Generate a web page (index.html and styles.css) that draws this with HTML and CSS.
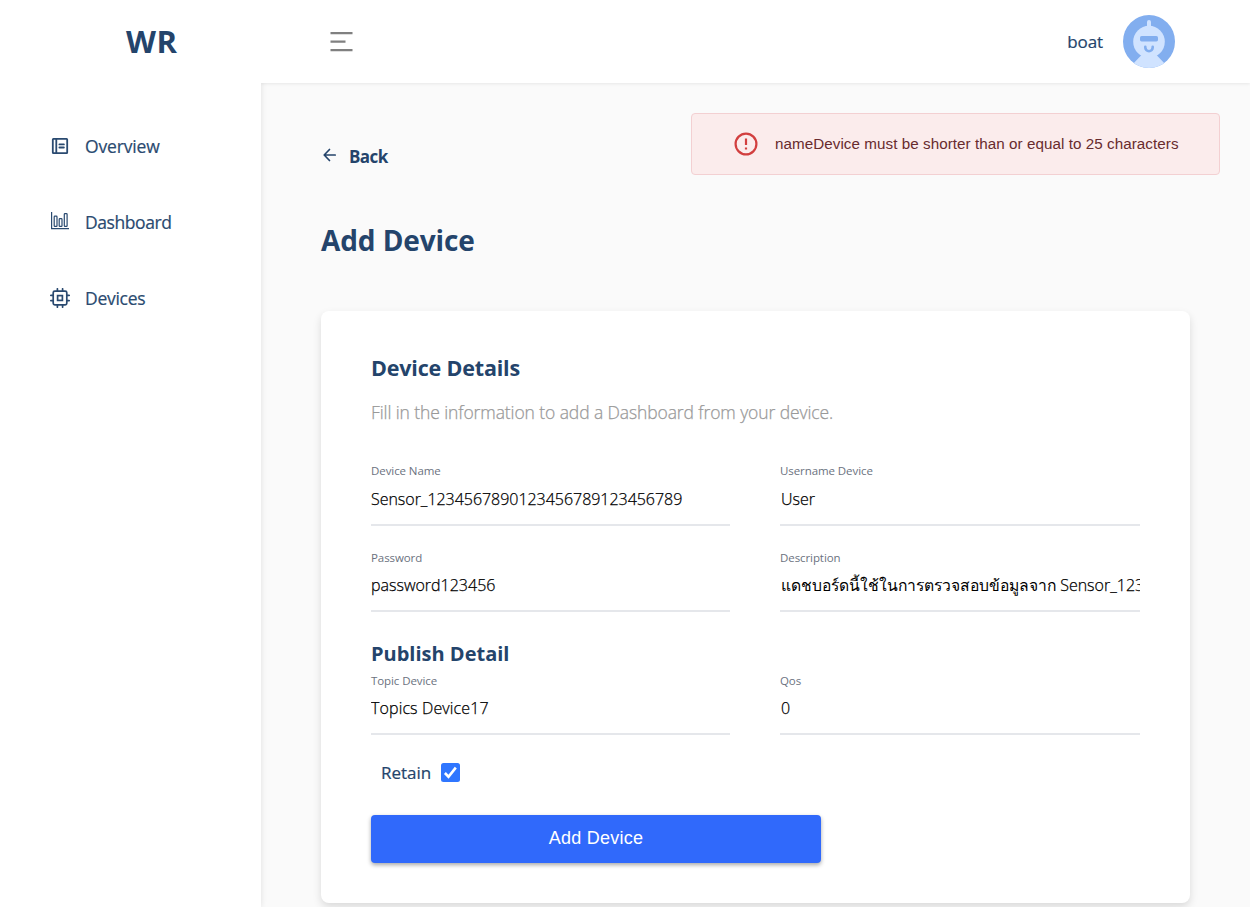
FILE: index.html
```html
<!DOCTYPE html>
<html lang="en">
<head>
<meta charset="utf-8">
<title>Add Device</title>
<link rel="stylesheet" href="styles.css">
</head>
<body>
<div class="app">
  <aside class="sidebar">
    <div class="brand">WR</div>
    <nav class="nav">
      <a class="nav-item">
        <svg class="nav-icon" viewBox="0 0 20 20" fill="none" stroke="currentColor" stroke-width="1.8" stroke-linejoin="round" stroke-linecap="round"><rect x="2.8" y="2.8" width="14.4" height="14.4" rx=".6"/><path d="M6.3 3v14M9.4 8.400h4.500M9.400 11.500h4.500"/></svg>
        <span class="t-overview">Overview</span>
      </a>
      <a class="nav-item">
        <svg class="nav-icon nav-icon-chart" viewBox="0 0 20 20" fill="none" stroke="currentColor" stroke-width="1.200"><path d="M1.6 1v16.600H19"/><rect x="4.200" y="5.200" width="2.800" height="10.200" rx=".7"/><rect x="9.200" y="7.700" width="2.800" height="7.700" rx=".7"/><rect x="14.300" y="2.600" width="2.800" height="12.800" rx=".7"/></svg>
        <span class="t-dashboard">Dashboard</span>
      </a>
      <a class="nav-item">
        <svg class="nav-icon" viewBox="0 0 20 20" fill="none" stroke="currentColor" stroke-width="1.700" stroke-linecap="round"><rect x="3.200" y="3.200" width="13.600" height="13.600" rx="1.600"/><rect x="7.600" y="7.600" width="4.800" height="4.800"/><path d="M7.400 3V.8M12.600 3V.8M7.400 19.200V17M12.600 19.200V17M3 7.400H.8M3 12.600H.8M19.200 7.400H17M19.200 12.600H17"/></svg>
        <span class="t-devices">Devices</span>
      </a>
    </nav>
  </aside>
  <div class="main">
    <header class="topbar">
      <svg class="menu" viewBox="0 0 24 20" fill="none" stroke="#808080" stroke-width="2.200"><path d="M.5 1.200h22M.5 9.700h15M.5 18.200h22"/></svg>
      <div class="user">
        <span class="user-name">boat</span>
        <svg class="avatar" viewBox="0 0 52 53"><defs><clipPath id="disc"><ellipse cx="26" cy="26.500" rx="26" ry="26.500"/></clipPath></defs><g clip-path="url(#disc)"><path fill="#82aeef" d="M0 0h52v53H0z"/><path fill="#d0e3ff" d="M24 12V7a2 2 0 0 1 4 0v5zM19 39.500 8 51v3h36v-3L33 39.500z"/></g><ellipse cx="26" cy="26.700" rx="15.800" ry="16" fill="#d0e3ff"/><rect x="17" y="21" width="18" height="5.400" rx="1.600" fill="#82aeef"/><path d="M22.300 31.800v.7a3.700 3.700 0 0 0 7.400 0v-.7" fill="none" stroke="#82aeef" stroke-width="2.600" stroke-linecap="round"/></svg>
      </div>
    </header>
    <main class="content">
      <a class="back">
        <svg class="back-icon" viewBox="0 0 14 14" fill="none" stroke="currentColor" stroke-width="1.700" stroke-linecap="round" stroke-linejoin="round"><path d="M12.700 7H2M7 1.500 1.700 7 7 12.500"/></svg>
        <span class="t-back">Back</span>
      </a>
      <h1 class="title">Add Device</h1>
      <section class="card">
        <h2 class="card-title">Device Details</h2>
        <p class="hint">Fill in the information to add a Dashboard from your device.</p>
        <div class="fields">
          <div class="field"><div class="label">Device Name</div><div class="value v-name">Sensor_1234567890123456789123456789</div></div>
          <div class="field"><div class="label">Username Device</div><div class="value v-right">User</div></div>
          <div class="field field-low"><div class="label">Password</div><div class="value">password123456</div></div>
          <div class="field field-low"><div class="label">Description</div><div class="value v-right"><span class="thai">แดชบอร์ดนี้ใช้ในการตรวจสอบข้อมูลจาก</span> Sensor_123</div></div>
        </div>
        <h3 class="sub-title">Publish Detail</h3>
        <div class="fields fields-publish">
          <div class="field"><div class="label">Topic Device</div><div class="value v-topic">Topics Device17</div></div>
          <div class="field"><div class="label">Qos</div><div class="value v-right">0</div></div>
        </div>
        <div class="retain">
          <span class="retain-label">Retain</span>
          <svg class="check" viewBox="0 0 19 19"><rect width="19" height="19" rx="2.500" fill="#2f76ff"/><path d="m3.900 10 3.600 3.700 7.300-9.100" fill="none" stroke="#fff" stroke-width="2.600"/></svg>
        </div>
        <button class="submit">Add Device</button>
      </section>
    </main>
  </div>
  <div class="toast">
    <svg class="toast-icon" viewBox="0 0 24 24"><circle cx="12" cy="12" r="10.400" fill="none" stroke="#d23f3f" stroke-width="2.200"/><path d="M12 6.500v6.500M12 15.400v2.200" stroke="#d23f3f" stroke-width="2.200"/></svg>
    <span class="toast-text">nameDevice must be shorter than or equal to 25 characters</span>
  </div>
</div>
</body>
</html>
```
FILE: styles.css
```css
* { box-sizing: border-box; }
body { margin: 0; font-family: "Open Sans", "Noto Sans", sans-serif; color: #24446b; background: #fafafa; }
h1, h2, h3, p { margin: 0; }
.app { position: relative; display: flex; width: 1250px; height: 907px; overflow: hidden; }
.sidebar { position: relative; z-index: 2; width: 261px; flex: none; background: #fff; box-shadow: 0 0 6px rgba(0,0,0,.11); }
.brand { height: 83px; padding-left: 126px; font-size: 31px; font-weight: 700; line-height: 83px; letter-spacing: .6px; }
.nav { display: flex; flex-direction: column; gap: 46px; padding: 48px 0 0 50px; }
.nav-item { display: flex; align-items: center; gap: 15px; height: 30px; font-size: 17.5px; color: #2a4a70; -webkit-text-stroke: .2px; }
.nav-icon { width: 20px; height: 20px; flex: none; }
.nav-icon-chart { margin-bottom: 2px; }
.t-overview { letter-spacing: -.15px; }
.t-dashboard { letter-spacing: -.42px; }
.t-devices { letter-spacing: -.28px; }
.main { flex: 1; display: flex; flex-direction: column; min-width: 0; }
.topbar { position: relative; z-index: 3; flex: none; display: flex; align-items: center; justify-content: space-between; height: 83px; padding: 0 75px 0 69px; background: #fff; box-shadow: 0 1px 3px rgba(0,0,0,.08); clip-path: inset(0 0 -6px 0); }
.menu { width: 24px; height: 20px; }
.user { display: flex; align-items: center; gap: 20px; font-size: 17px; }
.user-name { letter-spacing: -.1px; -webkit-text-stroke: .2px; }
.avatar { width: 52px; height: 53px; }
.content { padding: 58px 60px 0; }
.back { display: flex; align-items: center; gap: 12px; height: 30px; padding-left: 1px; font-size: 17.5px; font-weight: 700; }
.back-icon { width: 15px; height: 14px; margin-bottom: 2px; }
.t-back { font-size: 17px; letter-spacing: -.6px; }
.title { margin-top: 44px; font-size: 28px; line-height: 50px; font-weight: 700; letter-spacing: -.1px; }
.card { height: 592px; margin-top: 46px; padding: 40px 50px; background: #fff; border-radius: 8px; box-shadow: 0 4px 9px rgba(0,0,0,.13); }
.card-title { font-size: 21.5px; line-height: 34px; font-weight: 700; letter-spacing: -.18px; }
.hint { margin-top: 12px; font-size: 17.5px; line-height: 30px; font-weight: 300; color: #999; letter-spacing: -.1px; -webkit-text-stroke: .25px; }
.fields { display: grid; grid-template-columns: 359px 360px; column-gap: 50px; row-gap: 21px; }
.hint + .fields { margin-top: 34px; }
.field { height: 65px; border-bottom: 2px solid #e5e7eb; }
.label { height: 20px; font-size: 11.5px; line-height: 20px; color: #6b7280; letter-spacing: -.08px; }
.field-low .label { padding-top: 1px; }
.value { height: 36px; overflow: hidden; white-space: nowrap; font-size: 16px; line-height: 36px; font-weight: 300; color: #000; -webkit-text-stroke: .25px; }
.v-name { letter-spacing: -.03px; }
.v-topic { letter-spacing: .12px; }
.v-right { padding-left: 1px; }
.thai { font-size: 15.7px; -webkit-text-stroke: 0; }
.sub-title { margin-top: 25px; font-size: 20px; line-height: 33px; padding-bottom: 1px; font-weight: 700; }
.fields-publish .field { height: 64px; }
.fields-publish .value { line-height: 34px; }
.retain { display: flex; align-items: center; gap: 10px; height: 30px; margin: 22px 0 0 10px; font-size: 17px; -webkit-text-stroke: .2px; }
.retain-label { padding-top: 1px; }
.check { width: 19px; height: 19px; }
.submit { display: block; width: 450px; height: 48px; margin-top: 28px; padding: 0 0 2px; border: 0; border-radius: 4px; background: #3069fb; color: #fff; font: 18px "Liberation Sans", sans-serif; letter-spacing: .25px; box-shadow: 0 2px 4px rgba(0,0,0,.35); }
.toast { position: absolute; z-index: 5; top: 113px; left: 691px; display: flex; align-items: center; gap: 17px; width: 529px; height: 62px; padding: 0 0 1px 42px; background: #fbecec; border: 1px solid #f3d0d2; border-radius: 4px; color: #682b2e; font: 15.2px "Liberation Sans", sans-serif; letter-spacing: .06px; white-space: nowrap; }
.toast-icon { width: 24px; height: 24px; }
```
